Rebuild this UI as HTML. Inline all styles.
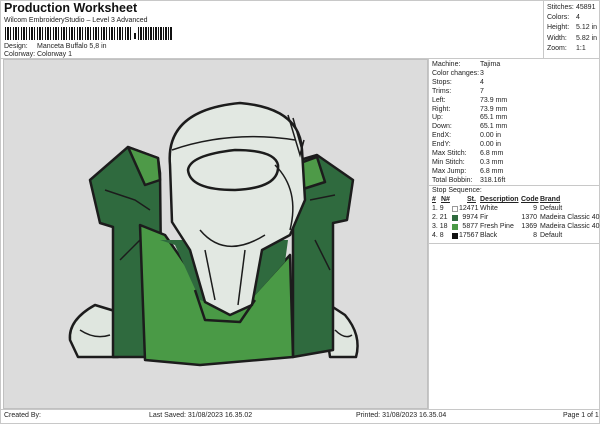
<!DOCTYPE html>
<html><head><meta charset="utf-8"><style>
*{margin:0;padding:0;box-sizing:border-box}
body{width:600px;height:424px;background:#fff;font-family:"Liberation Sans",sans-serif;color:#222;position:relative;overflow:hidden}
.a{position:absolute;white-space:nowrap}
.s{font-size:7px}
</style></head><body>
<div class="a" style="left:0;top:0;width:600px;height:424px;border:1px solid #c8c8c8"></div>
<div class="a" style="left:4px;top:1px;font-size:12.5px;font-weight:bold;color:#111">Production Worksheet</div>
<div class="a s" style="left:4px;top:17px">Wilcom EmbroideryStudio – Level 3 Advanced</div>
<div class="a" style="left:5px;top:27px;width:126px;height:13px;background:repeating-linear-gradient(90deg,#111 0 1px,#fff 1px 2px,#111 2px 4px,#fff 4px 5px,#111 5px 6px,#fff 6px 8px)"></div>
<div class="a" style="left:134px;top:33px;width:2px;height:6px;background:#111"></div>
<div class="a" style="left:138px;top:27px;width:34px;height:13px;background:repeating-linear-gradient(90deg,#111 0 1px,#fff 1px 2px,#111 2px 4px,#fff 4px 5px)"></div>
<div class="a s" style="left:4px;top:43px">Design:</div><div class="a s" style="left:37px;top:43px">Manceta Buffalo 5,8 in</div>
<div class="a s" style="left:4px;top:51px">Colorway:</div><div class="a s" style="left:37px;top:51px">Colorway 1</div>
<div class="a" style="left:543px;top:0;width:56px;height:58px;border-left:1px solid #c8c8c8"></div>
<div class="a s" style="left:547px;top:3px;line-height:10.2px">Stitches:<br>Colors:<br>Height:<br>Width:<br>Zoom:</div>
<div class="a s" style="left:576px;top:3px;line-height:10.2px">45891<br>4<br>5.12 in<br>5.82 in<br>1:1</div>
<div class="a" style="left:0;top:58px;width:600px;height:1px;background:#c8c8c8"></div>
<div class="a" style="left:3px;top:59px;width:425px;height:350px;background:#dcdcdc;border:1px solid #c0c0c0"></div>
<svg class="a" style="left:3px;top:59px" width="425" height="350" viewBox="3 59 425 350">
<g stroke="#1c1c1c" stroke-width="2.5" stroke-linejoin="round">
<path d="M70,340 Q68,320 95,305 L118,312 L118,357 L78,357 Z" fill="#dfe6df"/>
<path d="M322,300 L345,315 Q362,335 356,357 L330,357 Z" fill="#dfe6df"/>
<path d="M90,180 L128,147 L158,158 L160,173 L162,357 L113,357 L113,227 L100,223 Z" fill="#2f6a3e"/>
<path d="M293,162 L317,155 L353,180 L347,220 L333,223 L333,350 L293,357 Z" fill="#2f6a3e"/>
<path d="M128,147 L158,158 L160,180 L145,185 Z" fill="#4e9a48"/>
<path d="M295,165 L317,157 L325,182 L300,190 Z" fill="#4e9a48"/>
<path d="M140,225 L165,235 L210,300 L240,310 L290,255 L293,357 L200,365 L145,360 Z" fill="#4a9a46"/>
<path d="M160,240 L175,245 L200,300 L240,312 L285,262 L288,240 Z" fill="#2f6a3e" stroke="none"/>
<path d="M170,165 Q165,110 240,103 Q300,108 302,150 L305,200 L290,235 L262,250 L252,305 L230,315 L205,302 L190,250 L172,222 Z" fill="#e2e8e2"/>
<path d="M188,170 Q190,155 235,150 Q275,150 278,165 Q280,188 235,190 Q190,190 188,170 Z" fill="#e2e8e2"/>
<path d="M195,290 L205,320 L240,322 L255,300" fill="none"/>
</g>
<g stroke="#1c1c1c" stroke-width="1.5" fill="none">
<path d="M172,150 Q230,130 295,140"/><path d="M275,165 Q300,190 290,230"/><path d="M200,230 Q225,260 265,235"/><path d="M205,250 L215,300"/><path d="M245,250 L238,305"/>
<path d="M105,190 L135,200 L150,210"/><path d="M310,200 L335,195"/><path d="M140,240 L120,260"/><path d="M315,240 L330,270"/>
<path d="M288,115 L300,155 L304,140"/><path d="M293,118 L302,150"/><path d="M80,330 Q95,340 110,335"/><path d="M335,330 Q345,340 352,335"/>
</g>
</svg>
<div class="a" style="left:428px;top:59px;width:1px;height:350px;background:#c8c8c8"></div>
<div class="a s" style="left:432px;top:61px;line-height:8.9px">Machine:<br>Color changes:<br>Stops:<br>Trims:<br>Left:<br>Right:<br>Up:<br>Down:<br>EndX:<br>EndY:<br>Max Stitch:<br>Min Stitch:<br>Max Jump:<br>Total Bobbin:</div>
<div class="a s" style="left:480px;top:61px;line-height:8.9px">Tajima<br>3<br>4<br>7<br>73.9 mm<br>73.9 mm<br>65.1 mm<br>65.1 mm<br>0.00 in<br>0.00 in<br>6.8 mm<br>0.3 mm<br>6.8 mm<br>318.16ft</div>
<div class="a" style="left:429px;top:185px;width:170px;height:1px;background:#c8c8c8"></div>
<div class="a s" style="left:432px;top:187px">Stop Sequence:</div>
<div class="a s" style="left:432px;top:196px;font-weight:bold;text-decoration:underline">#</div>
<div class="a s" style="left:441px;top:196px;font-weight:bold;text-decoration:underline">N#</div>
<div class="a s" style="left:467px;top:196px;font-weight:bold;text-decoration:underline">St.</div>
<div class="a s" style="left:480px;top:196px;font-weight:bold;text-decoration:underline">Description</div>
<div class="a s" style="left:521px;top:196px;font-weight:bold;text-decoration:underline">Code</div>
<div class="a s" style="left:540px;top:196px;font-weight:bold;text-decoration:underline">Brand</div>
<div class="a s" style="left:432px;top:205px;line-height:8.9px">1. 9<br>2. 21<br>3. 18<br>4. 8</div>
<div class="a" style="left:452px;top:206px;width:6px;height:6px;border:1px solid #999;background:#fff"></div>
<div class="a" style="left:452px;top:215px;width:6px;height:6px;background:#2f6a3e"></div>
<div class="a" style="left:452px;top:224px;width:6px;height:6px;background:#4a9a46"></div>
<div class="a" style="left:452px;top:233px;width:6px;height:6px;background:#111"></div>
<div class="a s" style="left:459px;top:205px;line-height:8.9px;width:19px;text-align:right">12471<br>9974<br>5877<br>17567</div>
<div class="a s" style="left:480px;top:205px;line-height:8.9px">White<br>Fir<br>Fresh Pine<br>Black</div>
<div class="a s" style="left:519px;top:205px;line-height:8.9px;width:18px;text-align:right">9<br>1370<br>1369<br>8</div>
<div class="a s" style="left:540px;top:205px;line-height:8.9px">Default<br>Madeira Classic 40<br>Madeira Classic 40<br>Default</div>
<div class="a" style="left:429px;top:243px;width:170px;height:1px;background:#c8c8c8"></div>
<div class="a" style="left:0;top:409px;width:600px;height:1px;background:#c8c8c8"></div>
<div class="a s" style="left:4px;top:412px">Created By:</div>
<div class="a s" style="left:149px;top:412px">Last Saved: 31/08/2023 16.35.02</div>
<div class="a s" style="left:356px;top:412px">Printed: 31/08/2023 16.35.04</div>
<div class="a s" style="left:563px;top:412px">Page 1 of 1</div>
</body></html>
